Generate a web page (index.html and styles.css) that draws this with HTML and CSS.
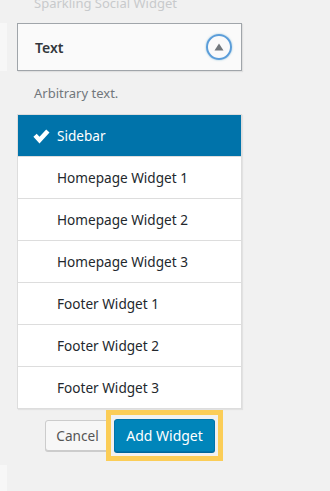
FILE: index.html
```html
<!DOCTYPE html>
<html>
<head>
<meta charset="utf-8">
<link rel="stylesheet" href="styles.css">
</head>
<body>
<div class="page">
  <div class="rail">
    <div class="rail-block rail-top"></div>
    <div class="rail-block rail-bottom"></div>
  </div>
  <div class="col">
    <div class="prev-title">Sparkling Social Widget</div>
    <div class="widget-head">
      <span class="widget-name">Text</span>
      <span class="toggle">
        <svg width="10" height="8" viewBox="0 0 10 8"><path d="M5 0.5 L9.5 7.5 L0.5 7.5 Z" fill="#72777c"/></svg>
      </span>
    </div>
    <div class="desc">Arbitrary text.</div>
    <ul class="areas">
      <li class="area selected">
        <svg class="check" width="17" height="15" viewBox="0 0 17 15"><path d="M0.4 7.8 L3.7 4.8 L6.5 7.7 L13.2 0.4 L16.5 3.4 L6.5 14.4 Z" fill="#fff"/></svg>
        Sidebar
      </li>
      <li class="area">Homepage Widget 1</li>
      <li class="area">Homepage Widget 2</li>
      <li class="area">Homepage Widget 3</li>
      <li class="area">Footer Widget 1</li>
      <li class="area">Footer Widget 2</li>
      <li class="area">Footer Widget 3</li>
    </ul>
    <div class="actions">
      <button class="btn btn-cancel">Cancel</button>
      <span class="focus-ring"><button class="btn btn-primary">Add Widget</button></span>
    </div>
  </div>
</div>
</body>
</html>
```

FILE: styles.css
```css
* { box-sizing: border-box; }
html, body { margin: 0; padding: 0; }
body {
  background: #f1f1f1;
  font-family: "Noto Sans", "Open Sans", sans-serif;
  color: #23282d;
  width: 330px;
  height: 491px;
  overflow: hidden;
}
.page {
  display: flex;
  height: 491px;
}
.rail {
  width: 7px;
  display: flex;
  flex-direction: column;
  margin-right: 10px;
}
.rail-block { background: #f7f7f7; }
.rail-top { margin-top: 23px; height: 48px; }
.rail-bottom { margin-top: auto; height: 26px; }
.col {
  width: 225px;
  display: flex;
  flex-direction: column;
}
.prev-title {
  font-size: 13px;
  line-height: 18px;
  height: 18px;
  margin-top: -6px;
  margin-bottom: 11px;
  padding-left: 17px;
  color: #c8cacc;
}
.widget-head {
  height: 48px;
  border: 1px solid #a0a5aa;
  background: #fafafa;
  box-shadow: 1px 1px 1px rgba(0,0,0,.07);
  display: flex;
  align-items: center;
  justify-content: space-between;
  padding: 0 9px 0 17px;
}
.widget-name {
  font-size: 14px;
  font-weight: 600;
  color: #32373c;
}
.toggle {
  width: 26px;
  height: 26px;
  border: 2px solid #5b9dd9;
  border-radius: 50%;
  display: flex;
  align-items: center;
  justify-content: center;
  box-shadow: 0 0 2px rgba(30,140,190,.5);
}
.toggle svg { margin-top: -1px; }
.desc {
  font-size: 13px;
  line-height: 20px;
  color: #72777c;
  padding-left: 17px;
  margin: 12px 0 11px;
}
.areas {
  list-style: none;
  margin: 0;
  padding: 0;
  background: #fff;
  border: 1px solid #ddd;
  box-shadow: 1px 1px 1px rgba(0,0,0,.06);
}
.area {
  height: 42px;
  border-top: 1px solid #ddd;
  display: flex;
  align-items: center;
  padding-left: 39px;
  font-size: 13.6px;
  color: #23282d;
}
.area:first-child { border-top: 0; height: 41px; }
.area.selected {
  background: #0073aa;
  color: #fff;
  padding-left: 15px;
}
.check { margin-right: 7px; margin-top: 1px; }
.actions {
  display: flex;
  align-items: flex-start;
  padding-left: 28px;
  margin-top: 1px;
}
.btn {
  font-family: inherit;
  font-size: 13.6px;
  border-radius: 3px;
  padding: 0;
  cursor: pointer;
}
.btn-cancel {
  width: 65px;
  height: 31px;
  margin-top: 10px;
  background: #f7f7f7;
  border: 1px solid #ccc;
  box-shadow: 0 1px 0 #ccc;
  color: #555;
}
.focus-ring {
  display: flex;
  margin-left: -4px;
  padding: 4px 3px;
  border: 5px solid #fbcd57;
}
.btn-primary {
  width: 101px;
  height: 33px;
  background: #0085ba;
  border: 1px solid #0073aa;
  box-shadow: 0 1px 0 #006799;
  color: #fff;
  font-size: 14px;
}
```
